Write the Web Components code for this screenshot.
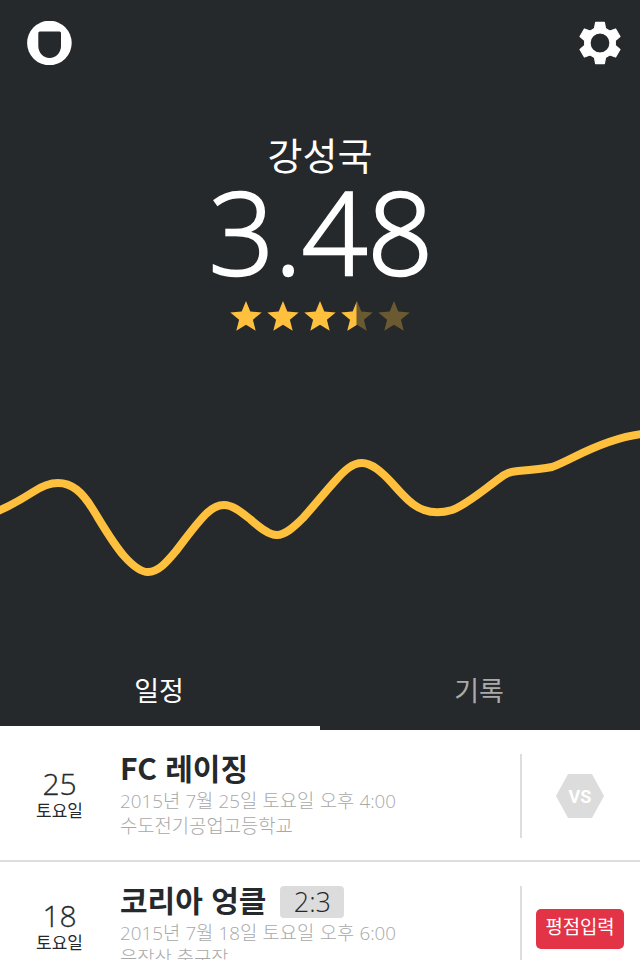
<!DOCTYPE html>
<html lang="ko"><head><meta charset="utf-8"><title>강성국</title>
<style>
html,body{margin:0;padding:0;background:#fff}
body{width:640px;height:960px;overflow:hidden;font-family:"Noto Sans CJK KR","Noto Sans",sans-serif}
</style></head><body>
<x-app>
  <x-profile name="강성국" score="3.48"></x-profile>
  <x-chart></x-chart>
  <x-tabs></x-tabs>
  <x-match day="25" wd="토요일" title="FC 레이징" date="2015년 7월 25일 토요일 오후 4:00" place="수도전기공업고등학교" action="vs"></x-match>
  <x-match day="18" wd="토요일" title="코리아 엉클" result="2:3" date="2015년 7월 18일 토요일 오후 6:00" place="응장산 축구장" action="rate"></x-match>
</x-app>
<script>
const FONT='"Noto Sans CJK KR","Noto Sans",sans-serif';
const NUM='"Open Sans","Noto Sans CJK KR",sans-serif';
function gear(cx,cy){
  let d='';
  for(let i=0;i<6;i++){
    const a=(-90+i*60)*Math.PI/180;
    const p=(r,o)=>{const t=a+o*Math.PI/180;return (cx+r*Math.cos(t)).toFixed(2)+' '+(cy+r*Math.sin(t)).toFixed(2)};
    d+=(i?'L':'M')+p(15.5,-21)+'L'+p(21,-12)+'L'+p(21,12)+'L'+p(15.5,21);
  }
  return d+'Z';
}
class XApp extends HTMLElement{constructor(){super();this.attachShadow({mode:'open'}).innerHTML=`<style>:host{display:flex;flex-direction:column;width:640px;height:960px;overflow:hidden;background:#fff}::slotted(*){flex:none}</style><slot></slot>`}}
const STAR='M16 1l4.3 10.6 11.4.8-8.8 7.3 2.8 11.1L16 24.8l-9.700 6 2.800-11.100-8.800-7.300 11.400-.8z';
class XProfile extends HTMLElement{connectedCallback(){
  const s=[0,1,2,3,4].map(i=>{
    const dim=`<path d="${STAR}" fill="#ffc03d" opacity=".32"/>`;
    const full=`<path d="${STAR}" fill="#ffc03d"/>`;
    const half=`<clipPath id="h"><rect width="15.5" height="32"/></clipPath>${dim}<path d="${STAR}" fill="#ffc03d" clip-path="url(#h)"/>`;
    return `<svg width="32" height="32" viewBox="0 0 32 32">${i<3?full:i==3?half:dim}</svg>`}).join('');
  this.attachShadow({mode:'open'}).innerHTML=`<style>
  :host{display:block;background:#25292c;color:#fff;height:388px;font-family:${FONT}}
  .top{display:flex;justify-content:space-between;padding:21px 18px 0 27px;height:44px}
  .name{margin-top:65px;text-align:center;font-size:38px;line-height:48px;font-weight:400}
  .score{text-align:center;font-size:115px;line-height:126px;font-weight:300;font-family:${NUM};margin-top:-10px;padding-left:2px;-webkit-text-stroke:2.4px #fff}
  .stars{display:flex;justify-content:center;gap:5px;margin-top:6px}
  svg{display:block}
  </style>
  <div class="top">
   <svg width="45" height="44" viewBox="0 0 45 44"><circle cx="22.400" cy="22" r="22.300" fill="#fff"/><path d="M11.300 12Q11.300 10.500 12.800 10.500H32.500Q34 10.500 34 12V25C34 31.500 29 37 22.600 37S11.300 31.500 11.300 25Z" fill="#25292c"/></svg>
   <svg width="44" height="44" viewBox="0 0 44 44"><path fill-rule="evenodd" fill="#fff" stroke="#fff" stroke-width="1.200" stroke-linejoin="round" d="${gear(22,22)}M32 22A10 10 0 1 0 12 22A10 10 0 1 0 32 22Z"/></svg>
  </div>
  <div class="name">${this.getAttribute('name')}</div>
  <div class="score">${this.getAttribute('score')}</div>
  <div class="stars">${s}</div>`;
}}
class XChart extends HTMLElement{constructor(){super();this.attachShadow({mode:'open'}).innerHTML=`<style>:host{display:block;background:#25292c;height:270px}svg{display:block}</style>
<svg width="640" height="270" viewBox="0 388 640 270"><path fill="none" stroke="#ffc03d" stroke-width="8" d="M-2 511C12 505 22 499 33 492C42 486 50 483 58 483C72 483 82 492 92 508C102 524 112 542 124 556C132 565 140 572 148 572C158 572 166 563 176 551C186 538 196 524 206 514C212 508 218 505 224 505C232 505 240 511 250 519C258 526 268 535 277 535C285 535 293 528 303 518C313 507 325 492 336 480C344 471 352 463 362 463C372 463 382 472 392 483C402 494 412 506 424 510C432 513 442 513 452 510C466 505 482 491 500 478C506 473 510 472 518 471C530 470 542 469 552 467C558 465 564 462 574 457C590 449 616 437 642 434"/></svg>`}}
class XTabs extends HTMLElement{constructor(){super();this.attachShadow({mode:'open'}).innerHTML=`<style>
:host{display:flex;background:#25292c;height:72px;font-family:${FONT}}
div{flex:1;text-align:center;font-size:27px;line-height:64px;box-sizing:border-box;color:#aaa;padding-right:2px}
.on{color:#fff;border-bottom:4px solid #fff}
</style><div class="on">일정</div><div>기록</div>`}}
class XMatch extends HTMLElement{connectedCallback(){
  const a=n=>this.getAttribute(n);
  const act=a('action')=='vs'
   ?`<div class="hex"><svg width="48" height="44" viewBox="0 0 48 44"><path d="M12 0H36L48 22L36 44H12L0 22Z" fill="#dcdcdc"/></svg><span>VS</span></div>`
   :`<div class="btn">평점입력</div>`;
  this.attachShadow({mode:'open'}).innerHTML=`<style>
  :host{display:flex;box-sizing:border-box;height:132px;padding:24px 0 0;border-bottom:2px solid #ddd;color:#25292c;font-family:${FONT}}
  .d{width:120px;flex:none;text-align:center;display:flex;flex-direction:column;align-items:center;padding-top:12px;box-sizing:border-box;padding-right:1px}
  .n{font-size:30px;line-height:36px;font-weight:300;font-family:${NUM};-webkit-text-stroke:.3px #25292c}
  .w{font-size:17px;line-height:20px;margin-top:-2px}
  .m{flex:1;min-width:0}
  .t{display:flex;align-items:center;font-size:30px;line-height:30px;font-weight:700;height:32px;margin-bottom:2px;padding-bottom:6px;box-sizing:border-box}
  .r{margin-left:14px;background:#dcdcdc;border-radius:4px;width:64px;height:32px;font-size:27px;line-height:32px;font-weight:300;text-align:center;font-family:${NUM};flex:none;position:relative;top:3px}
  .i{font-size:18.800px;line-height:24px;color:#a8a8a8;font-weight:300;white-space:nowrap;font-family:${NUM}}
  .i.d1{line-height:26px;word-spacing:.35px}
  .a{width:120px;flex:none;height:84px;border-left:2px solid #ddd;display:flex;align-items:center;justify-content:center;box-sizing:border-box;padding-right:2px}
  .hex{position:relative;width:48px;height:44px}
  .hex svg{display:block}
  .hex span{position:absolute;inset:0;text-align:center;line-height:46px;font-size:18px;font-weight:700;color:#fff;font-family:Roboto,sans-serif}
  .btn{background:#e33447;color:#fff;border-radius:5px;width:88px;height:40px;margin-top:2px;text-align:center;font-size:18.800px;line-height:34px}
  </style>
  <div class="d"><div class="n">${a('day')}</div><div class="w">${a('wd')}</div></div>
  <div class="m"><div class="t">${a('title')}${a('result')?`<span class="r">${a('result')}</span>`:''}</div><div class="i d1">${a('date')}</div><div class="i">${a('place')}</div></div>
  <div class="a">${act}</div>`;
}}
customElements.define('x-app',XApp);
customElements.define('x-profile',XProfile);
customElements.define('x-chart',XChart);
customElements.define('x-tabs',XTabs);
customElements.define('x-match',XMatch);
</script>
</body></html>
